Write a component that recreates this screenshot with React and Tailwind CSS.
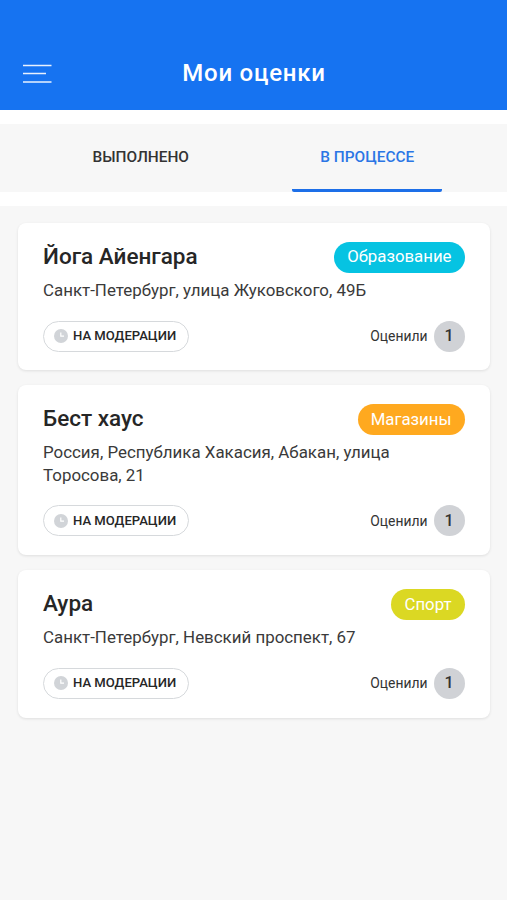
const TABS = [
  { id: 'done', label: 'Выполнено' },
  { id: 'progress', label: 'В процессе' },
];

const PLACES = [
  {
    name: 'Йога Айенгара',
    address: 'Санкт-Петербург, улица Жуковского, 49Б',
    category: 'Образование',
    color: 'bg-[#06c3e2]',
    votes: 1,
  },
  {
    name: 'Бест хаус',
    address: 'Россия, Республика Хакасия, Абакан, улица Торосова, 21',
    category: 'Магазины',
    color: 'bg-[#ffa91f]',
    votes: 1,
  },
  {
    name: 'Аура',
    address: 'Санкт-Петербург, Невский проспект, 67',
    category: 'Спорт',
    color: 'bg-[#dbd823]',
    votes: 1,
  },
];

const MenuIcon = () => (
  <svg className="w-[29px] h-5" viewBox="0 0 29 20" fill="none" stroke="currentColor" strokeWidth="1.5" strokeOpacity="0.9">
    <path d="M0 2.5h28.5M0 10.6h23M0 18.9h28.5" />
  </svg>
);

const ClockIcon = () => (
  <svg className="w-3.5 h-3.5" viewBox="0 0 14 14" fill="none">
    <circle cx="7" cy="7" r="7" fill="#d1d4d8" />
    <path d="M6.8 3.6v3.6h3.2" stroke="#fff" strokeWidth="1.2" />
  </svg>
);

const Header = () => (
  <header className="h-[110.3px] pt-9 px-[23px] grid grid-cols-[29px_1fr_29px] items-center bg-[#1673f1] text-white">
    <button type="button" aria-label="Меню">
      <MenuIcon />
    </button>
    <h1 className="pl-px text-center text-2xl font-medium tracking-[0.75px]">Мои оценки</h1>
  </header>
);

const Tabs = ({ active }) => (
  <nav className="h-[68px] mt-[13.7px] px-[27px] flex bg-[#f7f7f7]">
    {TABS.map((tab) => (
      <button
        key={tab.id}
        type="button"
        className={`flex-1 flex justify-center text-[15.4px] font-medium uppercase ${
          tab.id === active ? 'text-[#2b76e5]' : 'text-[#333]'
        }`}
      >
        <span
          className={`w-[150px] h-full pt-[3px] pl-px flex items-center justify-center border-b-3 rounded-[2px] ${
            tab.id === active ? 'border-[#1d6fe8]' : 'border-transparent'
          }`}
        >
          {tab.label}
        </span>
      </button>
    ))}
  </nav>
);

const PlaceCard = ({ place }) => (
  <article className="pt-[18.6px] pl-[25.5px] pr-[25px] pb-[18.8px] bg-white rounded-lg shadow-[0_1px_3px_rgba(0,0,0,0.1)]">
    <div className="h-[31px] flex items-center justify-between">
      <h2 className="text-[22.5px] font-medium text-[#262626]">{place.name}</h2>
      <span className={`h-[31px] px-[13px] flex items-center rounded-full text-[16.8px] text-white ${place.color}`}>
        {place.category}
      </span>
    </div>
    <p className="mt-[6.5px] max-w-[370px] text-[16.9px] leading-[22.5px] text-[#3a3a3a]">{place.address}</p>
    <div className="mt-[19.1px] flex items-center justify-between">
      <span className="h-[31px] pl-2.5 pr-3 flex items-center gap-[5px] border-[1.5px] border-[#d6d9dc] rounded-full text-[13.1px] font-medium text-[#262626] uppercase">
        <ClockIcon />
        На модерации
      </span>
      <span className="flex items-center gap-1.5 text-[13.9px] text-[#333]">
        Оценили
        <span className="size-[31px] flex items-center justify-center rounded-full bg-[#d0d2d6] text-base font-medium">
          {place.votes}
        </span>
      </span>
    </div>
  </article>
);

const App = () => {
  return (
    <div className="min-h-screen bg-white font-[Roboto,sans-serif]">
      <Header />
      <Tabs active="progress" />
      <main className="min-h-[694px] mt-3.5 pt-[17px] px-[17.5px] flex flex-col gap-[14.8px] bg-[#f7f7f7]">
        {PLACES.map((place) => (
          <PlaceCard key={place.name} place={place} />
        ))}
      </main>
    </div>
  );
};

export default App;
